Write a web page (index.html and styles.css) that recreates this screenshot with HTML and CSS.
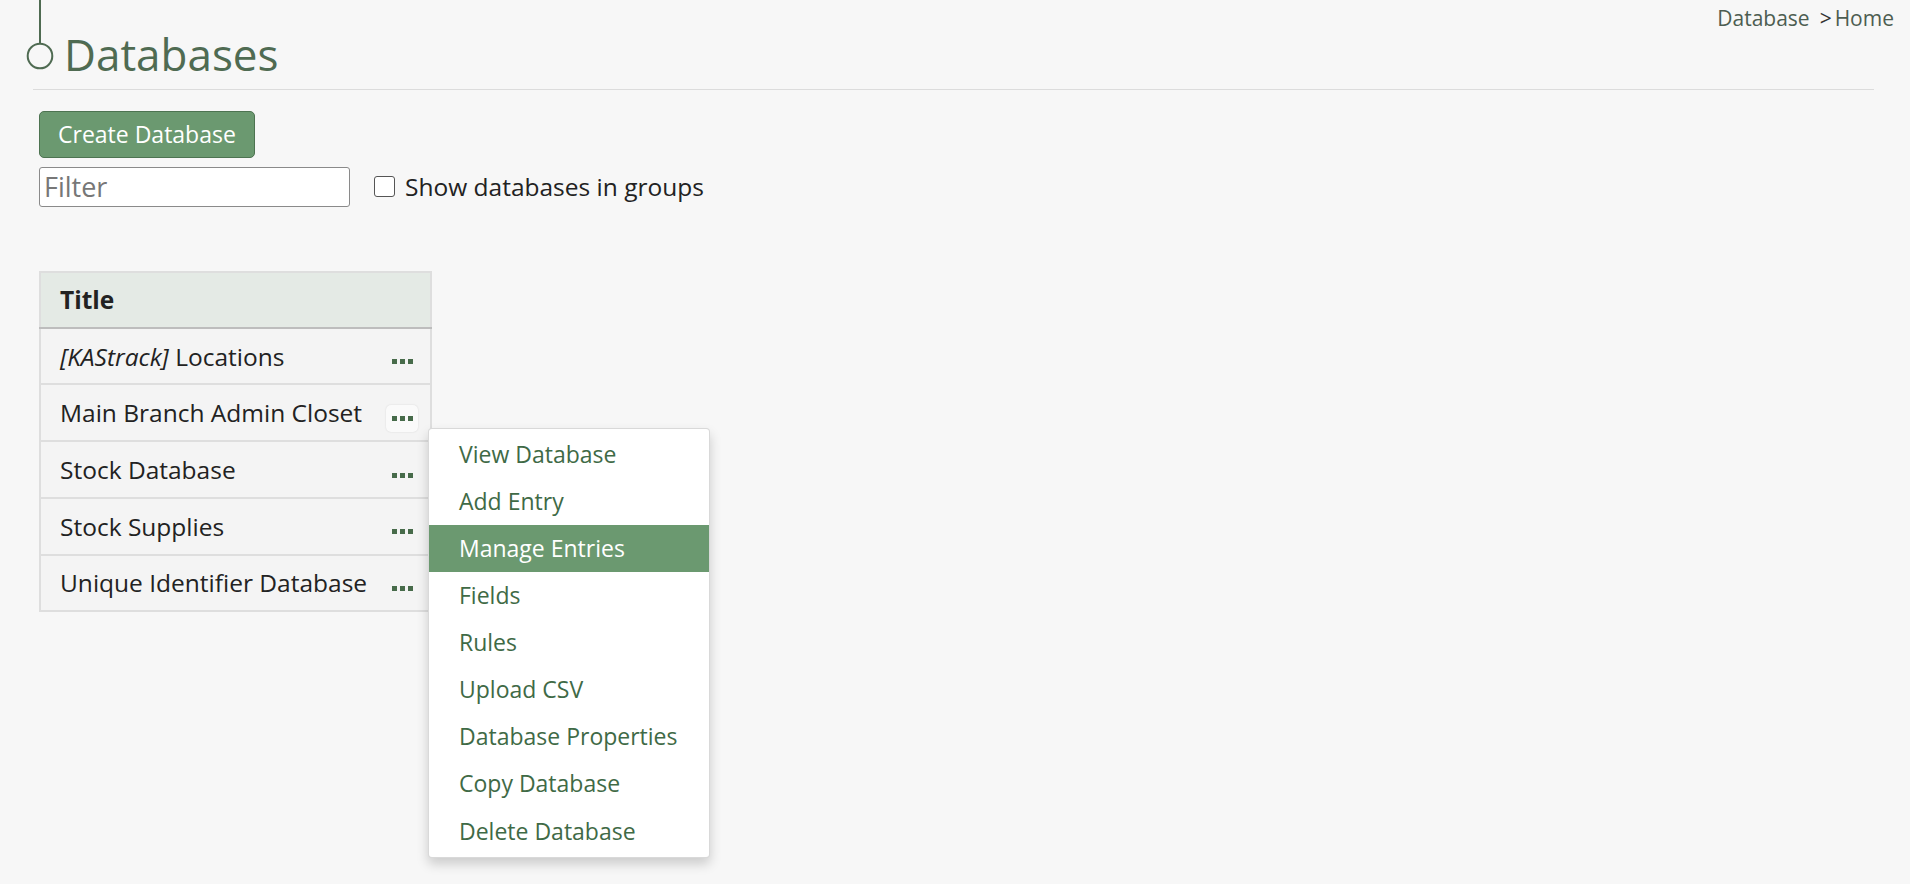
FILE: index.html
```html
<!DOCTYPE html>
<html lang="en">
<head>
	<meta charset="UTF-8">
	<title>Databases</title>
	<link rel="stylesheet" href="styles.css">
</head>
<body>
	<div class="page-head">
		<svg class="timeline" width="30" height="72" viewBox="0 0 30 72">
			<line x1="14" y1="0" x2="14" y2="43" stroke="#4f6b52" stroke-width="2"/>
			<circle cx="14" cy="56" r="12.3" fill="none" stroke="#4f6b52" stroke-width="2"/>
		</svg>
		<h1>Databases</h1>
		<div class="crumbs">
			<a href="javascript:;">Database</a><span class="sep">&gt;</span><a href="javascript:;">Home</a>
		</div>
	</div>
	<hr class="head-rule">

	<div class="content">
		<a href="javascript:;" class="btn-create">Create Database</a>
		<div class="filter-row">
			<input type="text" class="filter" placeholder="Filter">
			<label class="group-toggle"><input type="checkbox"> Show databases in groups</label>
		</div>

		<table class="db-table">
			<thead>
				<tr><th>Title</th></tr>
			</thead>
			<tbody>
				<tr><td><div class="cell"><span><i>[KAStrack]</i> Locations</span><span class="dots-btn"><b></b><b></b><b></b></span></div></td></tr>
				<tr><td><div class="cell"><span>Main Branch Admin Closet</span>
					<span class="dropdown">
						<span class="dots-btn open"><b></b><b></b><b></b></span>
						<ul class="menu">
							<li><a href="javascript:;">View Database</a></li>
							<li><a href="javascript:;">Add Entry</a></li>
							<li class="active"><a href="javascript:;">Manage Entries</a></li>
							<li><a href="javascript:;">Fields</a></li>
							<li><a href="javascript:;">Rules</a></li>
							<li><a href="javascript:;">Upload CSV</a></li>
							<li><a href="javascript:;">Database Properties</a></li>
							<li><a href="javascript:;">Copy Database</a></li>
							<li><a href="javascript:;">Delete Database</a></li>
						</ul>
					</span>
				</div></td></tr>
				<tr><td><div class="cell"><span>Stock Database</span><span class="dots-btn"><b></b><b></b><b></b></span></div></td></tr>
				<tr><td><div class="cell"><span>Stock Supplies</span><span class="dots-btn"><b></b><b></b><b></b></span></div></td></tr>
				<tr><td><div class="cell"><span>Unique Identifier Database</span><span class="dots-btn"><b></b><b></b><b></b></span></div></td></tr>
			</tbody>
		</table>
	</div>
</body>
</html>
```

FILE: styles.css
```css
*{box-sizing: border-box;}
html,body{min-height: 100%;}
body{margin: 0;min-height: 100vh;background: #f7f7f7;color: #222;font-family: "Open Sans", Lato, sans-serif;font-size: 23px;}
a{text-decoration: none;}
ul{list-style: none;margin: 0;padding: 0;}

/* header */
.page-head{display: flex;align-items: flex-start;}
.timeline{display: block;margin-left: 26px;flex: none;}
.page-head h1{margin: 28px 0 0 8px;font-size: 44px;font-weight: normal;line-height: 1.2;color: #4f6b52;}
.crumbs{margin-left: auto;padding: 6px 16px 0 0;font-size: 21px;line-height: 1.2;}
.crumbs a{color: #4d5d51;}
.crumbs .sep{color: #333;margin: 0 3px 0 10px;}
.head-rule{margin: 8px 36px 0 33px;border: 0;border-top: 1px solid #dcdcdc;}

/* toolbar */
.content{padding: 21px 0 0 39px;}
.btn-create{display: inline-block;height: 47px;line-height: 45px;padding: 0 18px;background: #6b9970;border: 1px solid #4d7351;border-radius: 5px;color: #fff;}
.filter-row{display: flex;align-items: center;margin-top: 9px;}
.filter{width: 311px;height: 40px;padding: 0 4px;border: 1px solid #8a8a8a;border-radius: 3px;background: #fff;font-family: inherit;font-size: 27px;color: #222;}
.filter::placeholder{color: #777;}
.group-toggle{display: flex;align-items: center;margin-left: 24px;font-size: 24.5px;color: #222;}
.group-toggle input{-webkit-appearance: none;appearance: none;width: 21px;height: 21px;margin: 0 10px 0 0;border: 1.5px solid #555;border-radius: 3px;background: #fff;}

/* table */
.db-table{margin-top: 64px;width: 393px;border-collapse: collapse;border: 2px solid #dedede;font-size: 24.5px;}
.db-table th{height: 56px;padding: 0 19px;text-align: left;background: #e4eae5;border-bottom: 2px solid #bdbdbd;font-weight: bold;}
.db-table td{height: 56.7px;padding: 0 12px 0 19px;background: #f4f4f4;border-bottom: 2px solid #dedede;}
.cell{display: flex;align-items: center;justify-content: space-between;}
.dots-btn{display: flex;align-items: center;justify-content: center;gap: 3px;width: 32px;height: 27px;margin-top: 11px;border-radius: 5px;flex: none;}
.dots-btn b{display: block;width: 5px;height: 5px;background: #476b4a;}
.dots-btn.open{background: #fafafa;box-shadow: 0 0 2px rgba(0,0,0,0.12);}

/* dropdown */
.dropdown{position: relative;margin-top: 11px;font-size: 23px;}
.dropdown .dots-btn{margin-top: 0;}
.menu{position: absolute;left: 42px;top: 23px;width: 282px;padding: 2px 0;background: #fff;border: 1px solid rgba(0,0,0,0.15);border-radius: 4px;box-shadow: 0 6px 12px rgba(0,0,0,0.18);z-index: 10;}
.menu li a{display: block;height: 47.1px;line-height: 47px;padding-left: 30px;color: #3f6a46;}
.menu li.active a{background: #6b9970;color: #fff;}
```
